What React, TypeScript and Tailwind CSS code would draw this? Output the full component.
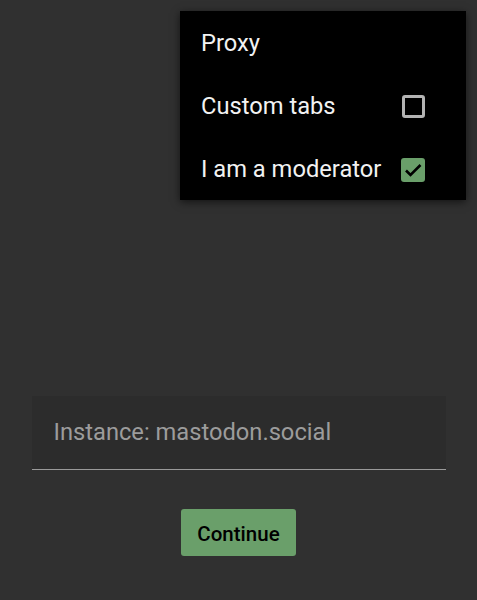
function MenuRow({ label, checked }: { label: string; checked?: boolean }) {
  return (
    <div className="flex items-center h-[63px] pl-[21px] pr-[41px]">
      <span className="flex-1 text-[23.7px] text-[#f2f2f2] leading-none mt-[3px]">{label}</span>
      {checked === true && (
        <span className="size-[24px] rounded-[3px] bg-[#6a9f6a] flex items-center justify-center mt-[2px]">
          <svg viewBox="0 0 24 24" className="size-[24px]" fill="none" stroke="black" strokeWidth={2.6}>
            <path d="M5 12.5l4.5 4.5L19.5 7" />
          </svg>
        </span>
      )}
      {checked === false && (
        <span className="size-[23px] rounded-[3px] border-[3px] border-[#b3b3b3] mt-[2px]" />
      )}
    </div>
  );
}

export default function App() {
  return (
    <main className="relative w-[477px] h-[600px] bg-[#303030] overflow-hidden font-['Roboto',sans-serif]">
      {/* Overflow menu */}
      <div className="absolute left-[180px] top-[11px] w-[286px] bg-black shadow-[0_2px_8px_rgba(0,0,0,0.6)]">
        <MenuRow label="Proxy" />
        <MenuRow label="Custom tabs" checked={false} />
        <MenuRow label="I am a moderator" checked={true} />
      </div>

      <div className="flex flex-col items-center pt-[396px]">
        <div className="w-[414px] h-[74px] bg-[#2c2c2c] border-b border-[#9a9a9a] flex items-center px-[22px]">
          <span className="text-[23.7px] text-[#9c9c9c] leading-none mt-[1px]">Instance: mastodon.social</span>
        </div>
        <button className="mt-[39px] w-[115px] h-[47px] rounded-[3px] bg-[#6a9f6a] text-black text-[20.5px] font-medium pt-[3px]">
          Continue
        </button>
      </div>
    </main>
  );
}
